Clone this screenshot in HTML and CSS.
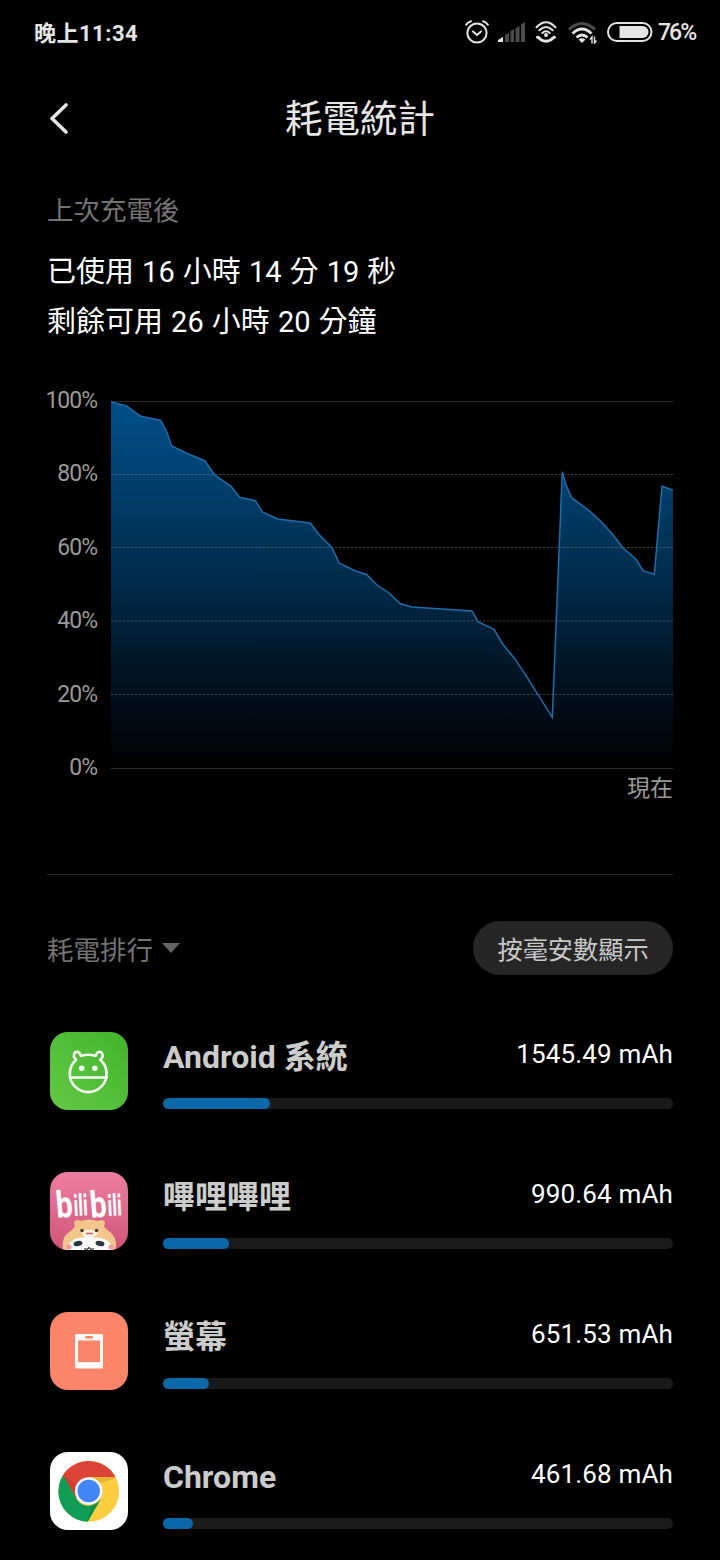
FILE: index.html
```html
<!DOCTYPE html>
<html lang="zh-Hant">
  <head>
    <title>耗電統計</title>
    <meta charset="utf-8">
    <meta name="viewport" content="width=device-width, initial-scale=1">
    <link rel="stylesheet" href="styles.css">
  </head>
  <body>
    <div class="statusbar">
      <span class="time">晚上11:34</span>
      <div class="status-icons">
        <!-- alarm -->
        <svg width="24" height="26" viewBox="0 0 24 26" fill="none" stroke="#e4e4e4" stroke-width="2" stroke-linecap="round">
          <circle cx="12" cy="14" r="9.6"/>
          <path d="M8 12.5l4 3.5 4-3.5"/>
          <path d="M1.2 5.6Q3 3 6 2.2M22.8 5.6Q21 3 18 2.2"/>
        </svg>
        <!-- signal -->
        <svg class="signal" width="27" height="20" viewBox="0 0 27 20">
          <path fill="#e4e4e4" d="M0 20v-2l5-3v5z"/>
          <path fill="#4c4c4c" d="M7 20v-7l4-2v9zM12.500 20V9l3.500-2v13zM17.500 20V6.500l4-2.500v16zM23 20V2.500L27 0v20z"/>
        </svg>
        <!-- hotspot -->
        <svg class="hotspot" width="22" height="22" viewBox="0 0 22 22" fill="none" stroke="#e4e4e4" stroke-width="2" stroke-linecap="round">
          <path d="M1.500 6.200Q11-3.800 20.500 6.200M4.300 9.300Q11 2.600 17.700 9.300M7.300 12Q11 8.600 14.700 12"/>
          <circle cx="11" cy="14" r="2" fill="#e4e4e4" stroke="none"/>
          <path stroke-width="3" d="M2.500 16.200Q4.500 17.200 6 18.700Q11 21.600 16 18.700Q17.500 17.200 19.500 16.200"/>
        </svg>
        <!-- wifi -->
        <svg class="wifi" width="29" height="22" viewBox="0 0 29 22" fill="none" stroke="#e4e4e4" stroke-width="2.800">
          <path stroke="#4c4c4c" d="M1 7.500Q14-4.500 27 7.500"/>
          <path d="M4.500 11.500Q14 2.500 23.500 11.500M8.500 15.500Q14 10.500 19.500 15.500"/>
          <path d="M10.500 17.600Q14 14.800 17.500 17.600L14 21z" fill="#e4e4e4" stroke="none"/>
          <path stroke-width="1.400" d="M24 21.500v-6.500l-2 2.500M26.500 14.500v6.500l2-2.500"/>
        </svg>
        <!-- battery -->
        <svg class="battery" width="46" height="20" viewBox="0 0 46 20">
          <rect x="1" y="1" width="43.500" height="18" rx="9" fill="none" stroke="#e4e4e4" stroke-width="2"/>
          <path d="M12.500 4h23a6 6 0 0 1 0 12h-23z" fill="#e4e4e4"/>
        </svg>
        <span class="percent">76%</span>
      </div>
    </div>

    <header>
      <svg class="back" width="20" height="32" viewBox="0 0 20 32" fill="none" stroke="#e4e4e4" stroke-width="3.600" stroke-linecap="round" stroke-linejoin="round">
        <path d="M18 2L4 15.500l14 13.500"/>
      </svg>
      <h1>耗電統計</h1>
    </header>

    <main>
      <section class="summary">
        <h2>上次充電後</h2>
        <p>已使用 16 小時 14 分 19 秒</p>
        <p>剩餘可用 26 小時 20 分鐘</p>
      </section>

      <section class="chart">
        <div class="scale">
          <span>100%</span>
          <span>80%</span>
          <span>60%</span>
          <span>40%</span>
          <span>20%</span>
          <span>0%</span>
        </div>
        <div class="plot">
          <svg width="562" height="368" viewBox="0 0 562 368">
            <defs>
              <linearGradient id="fade" x1="0" y1="0" x2="0" y2="1">
                <stop offset="0" stop-color="#00508a"/>
                <stop offset="0.500" stop-color="#002a48"/>
                <stop offset="0.800" stop-color="#000f1b"/>
                <stop offset="1" stop-color="#000"/>
              </linearGradient>
            </defs>
            <path fill="url(#fade)" d="M0 368V1L15 4.700L30 15.300L49.700 19.300L55.700 30.700L60.700 45L77.300 53L93.700 59.700L103.700 74L120 85.300L128.700 96.300L144.300 99.700L151.300 111L166.700 118L199.300 122L207.700 133.300L221 146.700L228.300 162.300L244 169.700L255.500 173.500L266 184L278 192L289 202.500L300.700 206L361 210L367 220.700L383 228.300L391.700 243L403.700 257.700L415.700 275.700L441.300 316.300L451.300 70.700L454.700 83.300L460.700 96.700L479 110.300L490.700 121.300L501.300 133L512.300 147.300L525 158.300L532 169.700L543.300 173.300L551 85.300L562 89V368z"/>
            <g stroke="#8f9aa0" stroke-opacity="0.380">
              <path stroke="#777" d="M0 .5h562M0 367.500h562"/>
              <path stroke-dasharray="2.600 1.400" d="M0 73.500h562M0 146.500h562M0 220h562M0 293.500h562"/>
            </g>
            <path fill="none" stroke="#1f6dac" stroke-width="1.500" d="M0 1L15 4.700L30 15.300L49.700 19.300L55.700 30.700L60.700 45L77.300 53L93.700 59.700L103.700 74L120 85.300L128.700 96.300L144.300 99.700L151.300 111L166.700 118L199.300 122L207.700 133.300L221 146.700L228.300 162.300L244 169.700L255.500 173.500L266 184L278 192L289 202.500L300.700 206L361 210L367 220.700L383 228.300L391.700 243L403.700 257.700L415.700 275.700L441.300 316.300L451.300 70.700L454.700 83.300L460.700 96.700L479 110.300L490.700 121.300L501.300 133L512.300 147.300L525 158.300L532 169.700L543.300 173.300L551 85.300L562 89"/>
          </svg>
          <span class="now">現在</span>
        </div>
      </section>

      <div class="toolbar">
        <div class="sort">耗電排行
          <svg width="18" height="10" viewBox="0 0 18 10"><path d="M0 0h18L9 10z" fill="#666"/></svg>
        </div>
        <button class="mode">按毫安數顯示</button>
      </div>

      <ul class="apps">
        <li>
          <svg class="icon" viewBox="0 0 78 78">
            <defs>
              <linearGradient id="green" x1="0" y1="1" x2="1" y2="0">
                <stop offset="0" stop-color="#62c946"/>
                <stop offset="1" stop-color="#43b42c"/>
              </linearGradient>
            </defs>
            <rect width="78" height="78" rx="18" fill="url(#green)"/>
            <g fill="none" stroke="#f6fff2" stroke-width="2.600" stroke-linecap="round" stroke-linejoin="round">
              <path d="M26.200 27.800A18.400 18.400 0 1 0 50.200 27.800C54.500 24.500 52.500 19 48.500 20C46.500 20.500 46 23 45.500 24Q38.200 21.500 31 24C30.500 23 30 20.500 28 20C24 19 22 24.500 26.200 27.800"/>
              <path d="M20 45.500h36.500"/>
            </g>
            <circle cx="31.700" cy="36.300" r="2.800" fill="#f6fff2"/>
            <circle cx="44.900" cy="36.300" r="2.800" fill="#f6fff2"/>
          </svg>
          <div class="info">
            <div class="line"><b>Android 系統</b><span>1545.49 mAh</span></div>
            <div class="bar"><div style="width: 107px"></div></div>
          </div>
        </li>
        <li>
          <svg class="icon" viewBox="0 0 78 78">
            <defs>
              <linearGradient id="pink" x1="0" y1="0" x2="0" y2="1">
                <stop offset="0" stop-color="#ee7ea1"/>
                <stop offset="1" stop-color="#cf5579"/>
              </linearGradient>
              <clipPath id="round"><rect width="78" height="78" rx="18"/></clipPath>
            </defs>
            <rect width="78" height="78" rx="18" fill="url(#pink)"/>
            <g class="logo">
              <text font-size="37" transform="translate(7 46) rotate(-5) scale(.8 1)">b</text>
              <text font-size="30" transform="translate(24 44) rotate(-3) scale(.6 1)">ili</text>
              <text font-size="37" transform="translate(41 46) rotate(-5) scale(.8 1)">b</text>
              <text font-size="30" transform="translate(58 44) rotate(-3) scale(.6 1)">ili</text>
            </g>
            <!-- hamster on top of the panda -->
            <g clip-path="url(#round)">
              <path fill="#f3c68b" d="M13 78C12 72 13 65 17 62C20 59 24 57 25 54C22 50 26 46 31 49Q39 46 48 49C53 46 57 50 54 54C56 58 60 59 62 62C66 66 67 73 65 78z"/>
              <path fill="#fff0dc" d="M32 61Q33 57 39 58Q46 57 48 61Q45 66 39 66Q33 66 32 61z"/>
              <circle cx="32" cy="58.500" r="1.700" fill="#4a342b"/>
              <circle cx="46.500" cy="58.500" r="1.700" fill="#4a342b"/>
              <path stroke="#c75c67" stroke-width="1.500" d="M36 61.500h7"/>
              <path fill="#fffdf9" d="M17 78Q18 67 31 65.500Q39 64.500 47 65.500Q62 67 62 78z"/>
              <ellipse cx="28" cy="71.500" rx="4.500" ry="2.600" fill="#293744" transform="rotate(-12 28 71.500)"/>
              <ellipse cx="50" cy="71.500" rx="4.500" ry="2.600" fill="#293744" transform="rotate(12 50 71.500)"/>
              <path fill="none" stroke="#293744" stroke-width="1.200" d="M34 76.500l3 1 2-2 2 2 3-1"/>
              <circle cx="19" cy="75" r="2.500" fill="#ef9aa0"/>
              <circle cx="61" cy="75" r="2.500" fill="#ef9aa0"/>
            </g>
          </svg>
          <div class="info">
            <div class="line"><b>嗶哩嗶哩</b><span>990.64 mAh</span></div>
            <div class="bar"><div style="width: 66px"></div></div>
          </div>
        </li>
        <li>
          <svg class="icon" viewBox="0 0 78 78">
            <rect width="78" height="78" rx="18" fill="#fb8469"/>
            <path fill="#fffaf7" fill-rule="evenodd" d="M26.500 22h25a1.500 1.500 0 0 1 1.500 1.500v31.500a1.500 1.500 0 0 1-1.500 1.500h-25a1.500 1.500 0 0 1-1.500-1.500V23.500a1.500 1.500 0 0 1 1.500-1.500zM28 28.500v21.500h22V28.500z"/>
            <rect x="35" y="24" width="8" height="2.500" rx="1.200" fill="#fb8469"/>
          </svg>
          <div class="info">
            <div class="line"><b>螢幕</b><span>651.53 mAh</span></div>
            <div class="bar"><div style="width: 46px"></div></div>
          </div>
        </li>
        <li>
          <svg class="icon" viewBox="0 0 78 78">
            <defs>
              <clipPath id="disc"><circle cx="38.700" cy="39.300" r="30.400"/></clipPath>
            </defs>
            <rect width="78" height="78" rx="18" fill="#fff"/>
            <g clip-path="url(#disc)">
              <rect width="78" height="78" fill="#ffcd40"/>
              <path fill="#db4437" d="M0 0h78v25H38.700L26.300 46.500L13 23z"/>
              <path fill="#0f9d58" d="M0 10h6L26.300 46.500Q31 54 38.700 53.700Q46 54 51 46.500L37 71V78H0z"/>
              <path fill="#b7372e" fill-opacity="0.450" d="M13 23.500L25 32L25.500 45z"/>
              <path fill="#d9a528" fill-opacity="0.600" d="M38.700 25H69L51 31z"/>
              <path fill="#087d44" fill-opacity="0.400" d="M51 47L37.500 70L40 53z"/>
            </g>
            <circle cx="38.700" cy="39" r="13.800" fill="#f3f6fb"/>
            <circle cx="38.700" cy="39" r="11.200" fill="#4285f4"/>
          </svg>
          <div class="info">
            <div class="line"><b>Chrome</b><span>461.68 mAh</span></div>
            <div class="bar"><div style="width: 30px"></div></div>
          </div>
        </li>
      </ul>
    </main>
  </body>
</html>
```
FILE: styles.css
```css
* {
  box-sizing: border-box;
}
body {
  margin: 0;
  height: 1560px;
  overflow: hidden;
  background-color: #000;
  color: #fff;
  font-family: Roboto, "Noto Sans CJK TC", sans-serif;
}
h1, h2, p, ul {
  margin: 0;
  padding: 0;
  font-weight: 400;
}
svg {
  display: block;
  flex: none;
}
.statusbar {
  display: flex;
  justify-content: space-between;
  align-items: center;
  height: 64px;
  padding: 0 25px 0 34px;
  color: #e4e4e4;
}
.time {
  margin-top: -3px;
  font-size: 22px;
  font-weight: 700;
  letter-spacing: 0.5px;
}
.status-icons {
  display: flex;
  align-items: center;
}
.signal {
  margin-left: 9px;
}
.hotspot {
  margin-left: 10px;
}
.wifi {
  margin: 2px 0 0 11px;
}
.battery {
  margin-left: 10px;
}
.percent {
  width: 37px;
  margin-left: 5px;
  font-size: 23px;
  font-weight: 500;
  letter-spacing: -2px;
}
header {
  display: grid;
  grid-template-columns: 60px 1fr 60px;
  align-items: center;
  height: 108px;
  padding: 2px 48px 0;
}
h1 {
  color: #e6e6e6;
  font-size: 37.5px;
  text-align: center;
  line-height: 56px;
}
main {
  padding: 0 47px;
}
.summary {
  height: 229px;
  padding-top: 20px;
}
.summary h2 {
  margin-bottom: 17px;
  color: #737373;
  font-size: 26.5px;
  line-height: 38px;
}
.summary p {
  font-size: 29px;
  line-height: 50px;
  word-spacing: 0.9px;
}
.chart {
  display: flex;
  gap: 14px;
  height: 474px;
  border-bottom: 1px solid #262626;
}
.scale {
  display: flex;
  flex-direction: column;
  align-items: flex-end;
  justify-content: space-between;
  width: 50px;
  height: 395px;
  margin-top: -14px;
  color: #999;
  font-size: 23px;
  letter-spacing: -1px;
  line-height: 28px;
  white-space: nowrap;
}
.now {
  display: block;
  color: #999;
  font-size: 23px;
  line-height: 40px;
  text-align: right;
}
.toolbar {
  display: flex;
  justify-content: space-between;
  align-items: center;
  margin-top: 46px;
}
.sort {
  display: flex;
  align-items: center;
  gap: 9px;
  color: #737373;
  font-size: 26.5px;
}
.mode {
  width: 200px;
  height: 54px;
  padding: 0;
  border: 0;
  border-radius: 27px;
  background-color: #262626;
  color: #c8c8c8;
  font: inherit;
  font-size: 25.2px;
}
.apps {
  margin-top: 57px;
  list-style: none;
}
.apps li {
  display: flex;
  height: 140px;
  padding-left: 3px;
}
.icon {
  width: 78px;
  height: 78px;
  margin-right: 35px;
}
.info {
  flex: 1;
}
.line {
  display: flex;
  justify-content: space-between;
  height: 66px;
}
.line b {
  color: #ccc;
  font-size: 32px;
  line-height: 50px;
}
.line span {
  font-size: 26px;
  line-height: 44px;
  letter-spacing: 0.15px;
}
.bar {
  height: 11px;
  border-radius: 5.5px;
  background-color: #1a1a1a;
}
.bar div {
  height: 11px;
  border-radius: 5.5px;
  background-color: #0b68a8;
}
.logo {
  fill: #fff;
  font-family: Roboto, sans-serif;
  font-weight: 700;
}
```
